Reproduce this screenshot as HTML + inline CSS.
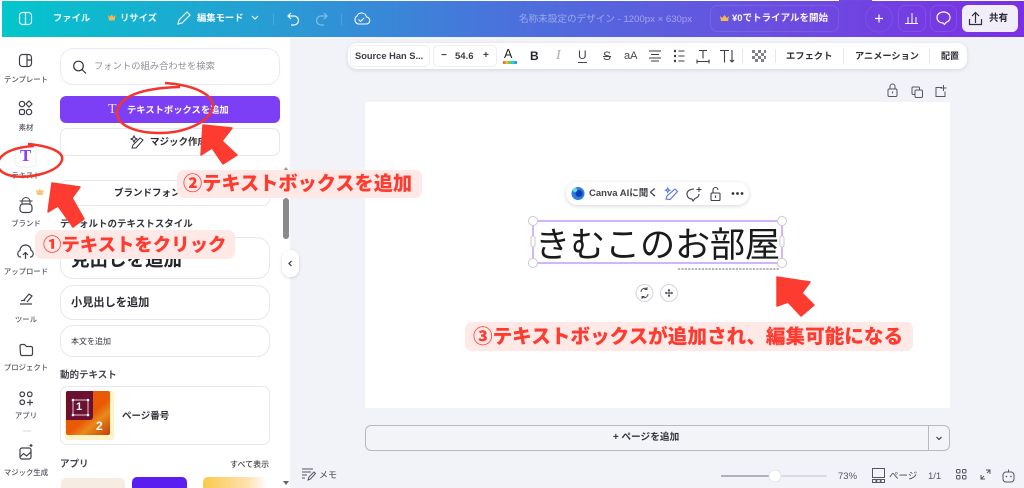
<!DOCTYPE html>
<html lang="ja"><head><meta charset="utf-8"><title>Canva</title>
<style>
*{box-sizing:border-box;margin:0;padding:0}
html,body{width:1024px;height:488px;overflow:hidden;background:#fff}
body{position:relative;font-family:"Liberation Sans","Noto Sans CJK JP",sans-serif;color:#2b2b33}
.a{position:absolute;white-space:nowrap}
.t{position:absolute;white-space:nowrap;line-height:1}
.box{position:absolute;background:#fff;border:1px solid #e6e7ef;border-radius:13px}
.nav{position:absolute;width:56px;text-align:center;font-size:7.4px;line-height:1;color:#55565f;font-weight:500;left:-2px}
svg{position:absolute;overflow:visible}
.lab{position:absolute;background:#ffe9e7;border-radius:7px;color:#ff3b30;font-weight:900;white-space:nowrap;line-height:1;display:flex;align-items:center}
.i{fill:none;stroke:#3f4048;stroke-width:1.2}
.h{font-weight:700;color:#fff}
</style></head><body>
<div class="a" style="left:290px;top:37px;width:734px;height:451px;background:#f1f3f8"></div>
<div class="a" style="left:2px;top:1px;width:1022px;height:36px;background:linear-gradient(90deg,#03c6cc 0%,#2a9ad4 28%,#4b70dc 50%,#6a4fe0 75%,#7b2fe3 100%)"></div>
<div class="a" style="left:839px;top:0;width:33px;height:1px;background:#6d4be0"></div>

<!-- top bar -->
<svg style="left:0;top:0" width="1024" height="37">
<g fill="none" stroke="#fff" stroke-width="1.2" opacity=".9">
<rect x="19.5" y="12.5" width="12" height="12" rx="3"/><path d="M25.5 12.5v12"/>
<path d="M178 24l1-4 8-8 3 3-8 8z"/>
<path d="M252 16l3 3 3-3"/>
</g>
<path d="M108 15l2 2 1.800-2.500 1.800 2.500 2-2-1 5.500h-5.600z" fill="#f5b74e"/>
<path d="M273.500 14v11M341.500 14v11" stroke="#fff" stroke-width=".8" opacity=".2"/>
<path d="M291 13l-3 3 3 3M288 16h6a4.500 4.500 0 0 1 0 9h-3" fill="none" stroke="#fff" stroke-width="1.200" opacity=".95"/>
<path d="M324 13l3 3-3 3M327 16h-6a4.500 4.500 0 0 0 0 9h3" fill="none" stroke="#fff" stroke-width="1.200" opacity=".4"/>
<path d="M358 24h8a3.500 3.500 0 0 0 .5-7 5 5 0 0 0-9.500-1 4.500 4.500 0 0 0 1 8zM358.500 19.500l2 2 3.500-3.500" fill="none" stroke="#fff" stroke-width="1.100"/>
<rect x="710.500" y="5.500" width="128" height="26" rx="7" fill="none" stroke="#fff" stroke-opacity=".1"/>
<path d="M720 16l2.200 2 2.300-3 2.300 3 2.200-2-1 5h-7z" fill="#f5b74e"/>
<circle cx="879" cy="18.500" r="13.500" fill="none" stroke="#fff" stroke-opacity=".08"/>
<path d="M879 14.500v8M875 18.500h8" stroke="#fff" stroke-width="1.200"/>
<rect x="898.500" y="5.500" width="27" height="26" rx="7" fill="none" stroke="#fff" stroke-opacity=".1"/>
<path d="M905 23.500h13M908 23v-6M912 23v-10M916 23v-6" stroke="#fff" stroke-width="1"/>
<rect x="930.500" y="5.500" width="26" height="26" rx="7" fill="none" stroke="#fff" stroke-opacity=".1"/>
<path d="M943.500 12c-4 0-6.500 2.500-6.500 5.500s2.500 5.500 6 5.500l1.500 1.500 1.500-2c2.500-1 4-2.600 4-5 0-3-2.500-5.500-6.500-5.500z" fill="none" stroke="#fff" stroke-width="1.200"/>
</svg>
<div class="t h" style="left:53px;top:14px;font-size:9.300px;opacity:.95">ファイル</div>
<div class="t h" style="left:120px;top:14px;font-size:9.300px;opacity:.95">リサイズ</div>
<div class="t h" style="left:197px;top:14px;font-size:9.300px;opacity:.95">編集モード</div>
<div class="t" style="left:519px;top:15px;font-size:9.600px;color:#fff;opacity:.42">名称未設定のデザイン - 1200px × 630px</div>
<div class="t h" style="left:732px;top:14px;font-size:9.500px;opacity:.95">¥0でトライアルを開始</div>
<div class="a" style="left:962px;top:5px;width:56px;height:27px;background:#f1edfb;border-radius:6px"></div>
<svg style="left:962px;top:5px" width="56" height="27"><path d="M13.500 8v10M10 11l3.500-3.500 3.500 3.500M7.500 14v5.500h12V14" fill="none" stroke="#2f2f38" stroke-width="1.200"/></svg>
<div class="t" style="left:989px;top:14px;font-size:9.500px;font-weight:700;color:#2b2b33">共有</div>

<!-- sidebar -->
<svg style="left:0;top:0" width="60" height="488">
<g class="i">
<rect x="19.500" y="54.500" width="12" height="12" rx="3"/><path d="M27 54.500v12M27 60h4.500"/>
<circle cx="22" cy="104" r="2.700"/><path d="M29 101l3 3-3 3-3-3z"/><rect x="19.500" y="109.500" width="5" height="5" rx="1.500"/><circle cx="29" cy="112" r="2.700"/>
<rect x="20" y="204" width="12" height="8.500" rx="3"/><path d="M22 204v-2.500a4 4 0 0 1 8 0v2.500M19.500 201h13" stroke-width="1"/>
<path d="M21 257h-1a3.500 3.500 0 0 1 0-6.500 5.500 5.500 0 0 1 11 0 3.500 3.500 0 0 1 0 6.500h-1M25.500 259v-6M23 255l2.500-2.500 2.500 2.500"/>
<path d="M20 304h12M24 300l5-6 3 2-5 6M21 301c2-1 3-1 4 0"/>
<path d="M20 346a1.500 1.500 0 0 1 1.500-1.500h3l2 2h4.500a1.500 1.500 0 0 1 1.500 1.500v6a1.500 1.500 0 0 1-1.500 1.500h-9a1.500 1.500 0 0 1-1.500-1.500z"/>
<rect x="20" y="392" width="4.500" height="4.500" rx="2"/><rect x="27.500" y="392" width="4.500" height="4.500" rx="2"/><rect x="20" y="400" width="4.500" height="4.500" rx="2"/><path d="M30 399.500v6M27 402.500h6"/>
<rect x="20" y="448" width="11" height="11" rx="2"/><path d="M20 457l3.500-3.500 3 2.500 4.500-4M31 444v3M29.500 445.500h3"/>
</g>
<path d="M23 431h8" stroke="#d9d9df" stroke-width="1"/>
<rect x="15" y="144" width="21" height="23" rx="5" fill="#fff" stroke="#e8e8f2" stroke-width=".7"/>
<path d="M36 189l2 2 1.800-2.500 1.800 2.500 2-2-1 6h-5.600z" fill="#f5c77e"/>
</svg>
<div class="t" style="left:20px;top:147px;font-size:17px;font-weight:700;color:#8b3dff;font-family:'Liberation Serif',serif;">T</div>
<div class="nav" style="top:76px">テンプレート</div>
<div class="nav" style="top:124px">素材</div>
<div class="nav" style="top:172px">テキスト</div>
<div class="nav" style="top:220px">ブランド</div>
<div class="nav" style="top:268px">アップロード</div>
<div class="nav" style="top:316px">ツール</div>
<div class="nav" style="top:364px">プロジェクト</div>
<div class="nav" style="top:412px">アプリ</div>
<div class="nav" style="top:469px">マジック生成</div>

<!-- panel -->
<div class="box" style="left:60px;top:48px;width:220px;height:37px;border-color:#ebe8fb"></div>
<svg style="left:60px;top:49px" width="40" height="37"><circle cx="18.500" cy="17" r="4.800" fill="none" stroke="#33343c" stroke-width="1.200"/><path d="M22 20.500l4 4" stroke="#33343c" stroke-width="1.200"/></svg>
<div class="t" style="left:94px;top:62px;font-size:9.300px;color:#8d8e96">フォントの組み合わせを検索</div>
<div class="a" style="left:60px;top:96px;width:220px;height:27px;background:#7d3ff5;border-radius:6px"></div>
<div class="t" style="left:108px;top:103px;font-size:14px;color:#e8ddff;font-family:'Liberation Serif',serif">T</div>
<div class="t" style="left:127px;top:106px;font-size:9.300px;color:#fff;font-weight:700">テキストボックスを追加</div>
<div class="box" style="left:60px;top:128px;width:220px;height:28px;border-radius:7px"></div>
<svg style="left:130px;top:134px" width="16" height="16"><path d="M2 14l1-3 7-7 3 2-7 8zM3 4l1-2 1 2 2 1-2 1-1 2-1-2-2-1z" fill="none" stroke="#30313a" stroke-width="1"/></svg>
<div class="t" style="left:150px;top:138px;font-size:9.500px;font-weight:700;color:#2b2b33">マジック作成</div>
<div class="box" style="left:60px;top:180px;width:210px;height:26px;border-radius:7px"></div>
<div class="t" style="left:114px;top:189px;font-size:9.500px;font-weight:700;color:#2b2b33">ブランドフォント</div>
<div class="t" style="left:60px;top:220px;font-size:9.500px;font-weight:700;color:#33343c">デフォルトのテキストスタイル</div>
<div class="box" style="left:60px;top:237px;width:210px;height:42px"></div>
<div class="t" style="left:71px;top:251px;font-size:18.500px;font-weight:700;color:#24242c">見出しを追加</div>
<div class="box" style="left:60px;top:285px;width:210px;height:35px"></div>
<div class="t" style="left:71px;top:298px;font-size:11.200px;font-weight:700;color:#2b2b33">小見出しを追加</div>
<div class="box" style="left:60px;top:325px;width:210px;height:32px"></div>
<div class="t" style="left:71px;top:338px;font-size:8px;color:#33343c">本文を追加</div>
<div class="t" style="left:60px;top:371px;font-size:9.500px;font-weight:700;color:#44454d">動的テキスト</div>
<div class="box" style="left:60px;top:386px;width:210px;height:59px;border-radius:7px"></div>
<div class="a" style="left:65px;top:391px;width:49px;height:49px;background:#fdf3c4;border-radius:3px"></div>
<div class="a" style="left:66px;top:391px;width:44px;height:44px;background:linear-gradient(140deg,#ea5a06 55%,#e98a1c 70%,#c33d05);border-radius:2px"></div>
<div class="a" style="left:66px;top:391px;width:27px;height:29px;background:#6b1030;border-radius:2px 0 3px 0"></div>
<svg style="left:66px;top:391px" width="48" height="48"><rect x="7" y="9" width="15" height="15" fill="none" stroke="#fff" stroke-width=".8"/><g fill="#fff"><circle cx="7" cy="9" r="1.300"/><circle cx="22" cy="9" r="1.300"/><circle cx="7" cy="24" r="1.300"/><circle cx="22" cy="24" r="1.300"/></g></svg>
<div class="t" style="left:76px;top:402px;font-size:11px;font-weight:700;color:#fff">1</div>
<div class="t" style="left:96px;top:420px;font-size:12px;font-weight:700;color:#fff">2</div>
<div class="t" style="left:122px;top:412px;font-size:9.500px;font-weight:700;color:#33343c">ページ番号</div>
<div class="t" style="left:60px;top:460px;font-size:9.500px;font-weight:700;color:#44454d">アプリ</div>
<div class="t" style="left:230px;top:461px;font-size:8px;font-weight:500;color:#44454d">すべて表示</div>
<div class="a" style="left:61px;top:478px;width:64px;height:10px;background:#f6ece2;border-radius:5px 5px 0 0"></div>
<div class="a" style="left:132px;top:477px;width:55px;height:11px;background:#5a1ff0;border-radius:5px 5px 0 0"></div>
<div class="a" style="left:203px;top:477px;width:64px;height:11px;background:linear-gradient(90deg,#fbc94a,#fde2b0 70%,#fff);border-radius:5px 5px 0 0"></div>
<div class="a" style="left:283px;top:198px;width:6px;height:41px;background:#8a8a8a;border-radius:3px"></div>
<div class="a" style="left:283px;top:164px;width:0;height:0;border:3px solid transparent;border-bottom:4px solid #999"></div>
<div class="a" style="left:283px;top:481px;width:0;height:0;border:3px solid transparent;border-top:4px solid #666"></div>
<div class="a" style="left:282px;top:250px;width:17px;height:27px;background:#fff;border-radius:8px;box-shadow:0 1px 3px rgba(0,0,0,.15)"></div>
<svg style="left:282px;top:250px" width="17" height="27"><path d="M9.500 11l-2.500 2.500 2.500 2.500" fill="none" stroke="#33343c" stroke-width="1.200"/></svg>

<!-- canvas -->
<div class="a" style="left:365px;top:102px;width:585px;height:306px;background:#fff"></div>
<svg style="left:880px;top:76px" width="80" height="30"><g fill="none" stroke="#55565f" stroke-width="1">
<rect x="8" y="13" width="9" height="7.500" rx="1.200"/><path d="M10 13v-2.500a2.500 2.500 0 0 1 5 0V13M12.500 15.500v2"/>
<rect x="32" y="11" width="7.500" height="7.500" rx="1.200"/><rect x="35" y="14" width="7.500" height="7.500" rx="1.200" fill="#f1f3f8"/>
<path d="M62 11.500h-6v9h9v-5M63.500 9v6M60.500 12h6"/></g></svg>

<!-- format toolbar -->
<div class="a" style="left:348px;top:43px;width:619px;height:26px;background:#fff;border-radius:9px;box-shadow:0 1px 4px rgba(30,30,60,.13)"></div>
<div class="a" style="left:350px;top:45px;width:80px;height:22px;border:1px solid #eeeef3;border-radius:5px"></div>
<div class="a" style="left:433px;top:45px;width:64px;height:22px;border:1px solid #eeeef3;border-radius:5px"></div>
<div class="t" style="left:355px;top:52px;font-size:9.300px;font-weight:700;color:#3d3e46">Source Han S...</div>
<div class="t" style="left:441px;top:51px;font-size:10px;font-weight:700;color:#3d3e46">−</div>
<div class="t" style="left:455px;top:52px;font-size:9.500px;font-weight:700;color:#3d3e46">54.6</div>
<div class="t" style="left:483px;top:51px;font-size:10px;font-weight:700;color:#3d3e46">+</div>
<div class="t" style="left:504px;top:48px;font-size:12.500px;color:#222">A</div>
<div class="a" style="left:503px;top:61px;width:14px;height:3px;border-radius:1px;background:linear-gradient(90deg,#f33,#fb3,#4d4,#2cf,#36f)"></div>
<div class="t" style="left:530px;top:50px;font-size:12px;font-weight:700;color:#26262e">B</div>
<div class="t" style="left:556px;top:49px;font-size:14px;font-style:italic;color:#aaa;font-family:'Liberation Serif',serif">I</div>
<div class="t" style="left:578px;top:49px;font-size:12px;color:#44454d">U</div>
<div class="a" style="left:578px;top:62px;width:9px;height:1px;background:#44454d"></div>
<div class="t" style="left:603px;top:50px;font-size:12px;color:#44454d;text-decoration:line-through">S</div>
<div class="t" style="left:624px;top:51px;font-size:11px;color:#44454d">aA</div>
<svg style="left:640px;top:40px" width="300" height="30"><g stroke="#3d3e46" stroke-width="1.100" fill="none">
<path d="M9 11h12M11 14.500h8M9 18h12M11 21h8"/>
<path d="M38.500 11h6M38.500 16h6M38.500 21h6"/><path d="M34 11h2M34 16h2M34 21h2" stroke-width="2.200"/>
<path d="M59 10.500h8M63 10.500v8M57 21.500h12M57 19.500v4M69 19.500v4"/>
<path d="M80 10.500h9M84.500 10.500v12M92 10v12M90 20l2 2 2-2"/>
<path d="M102.500 9v14M135.500 9v14M203.500 9v14M289.500 9v14" stroke="#e2e2e8" stroke-width=".9"/></g>
<g fill="#55565f" opacity=".75"><path d="M112 10h3v3h-3zM118 10h3v3h-3zM124 10h2v3h-2zM115 13h3v3h-3zM121 13h3v3h-3zM112 16h3v3h-3zM118 16h3v3h-3zM124 16h2v3h-2zM115 19h3v3h-3zM121 19h3v3h-3z"/></g>
</svg>
<div class="t" style="left:786px;top:52px;font-size:9.300px;font-weight:700;color:#2f3038">エフェクト</div>
<div class="t" style="left:855px;top:52px;font-size:9.200px;font-weight:700;color:#2f3038">アニメーション</div>
<div class="t" style="left:941px;top:52px;font-size:9px;font-weight:700;color:#2f3038">配置</div>

<!-- floating bar -->
<div class="a" style="left:566px;top:182px;width:183px;height:23px;background:#fff;border-radius:12px;box-shadow:0 1px 4px rgba(30,30,60,.18)"></div>
<svg style="left:566px;top:182px" width="183" height="23">
<circle cx="12" cy="11.500" r="6.500" fill="#2a7fe0"/><circle cx="13" cy="11.500" r="3.500" fill="#0f3bb5"/><circle cx="9" cy="8" r="2.200" fill="#66dce8"/>
<path d="M100 17l1-3 8-7 2.500 2.500-7.500 8zM101 7.500l.7-1.500.7 1.500 1.500.7-1.500.7-.7 1.500-.7-1.500-1.500-.7z" fill="none" stroke="#5176e8" stroke-width="1.100"/>
<path d="M128 7c-4 0-7 2-7 5s2 5 5 5l1 2 2-2.500c2-.7 4-2 4-4.500" fill="none" stroke="#3d3e46" stroke-width="1.100"/>
<path d="M133 5v5M130.500 7.500h5" stroke="#3d3e46" stroke-width="1"/>
<rect x="145" y="11" width="9" height="7.500" rx="1" fill="none" stroke="#3d3e46" stroke-width="1.100"/><path d="M147 11V8a2.500 2.500 0 0 1 5 0M149.500 13.500v2.500" fill="none" stroke="#3d3e46" stroke-width="1.100"/>
<circle cx="167" cy="11.500" r="1.400" fill="#33343c"/><circle cx="171.500" cy="11.500" r="1.400" fill="#33343c"/><circle cx="176" cy="11.500" r="1.400" fill="#33343c"/>
</svg>
<div class="t" style="left:589px;top:189px;font-size:9.500px;font-weight:700;color:#44454d">Canva AIに聞く</div>

<!-- selected text -->
<div class="t" style="left:535px;top:222px;font-size:35.200px;line-height:41px;color:#1a1a1a;font-family:'Noto Sans CJK JP','Liberation Sans',sans-serif;font-weight:400;letter-spacing:-.2px">きむこのお部屋</div>
<svg style="left:520px;top:210px" width="280" height="80">
<rect x="13" y="11" width="249" height="42" fill="none" stroke="#b98cfb" stroke-width="1.300"/>
<g fill="#fff" stroke="#c9c9d0" stroke-width="1"><circle cx="13" cy="11" r="4.500"/><circle cx="262" cy="11" r="4.500"/><circle cx="13" cy="53" r="4.500"/><circle cx="262" cy="53" r="4.500"/><rect x="11" y="26" width="4" height="11" rx="2"/><rect x="260" y="26" width="4" height="11" rx="2"/></g>
<path d="M158 59h101" stroke="#6c6c72" stroke-width="1" stroke-dasharray="2.200 1.200"/>
</svg>
<svg style="left:635px;top:283px" width="50" height="20">
<g fill="#fff" stroke="#d4d4da"><circle cx="9.500" cy="10" r="8.500"/><circle cx="34" cy="10" r="8.500"/></g>
<path d="M6 9a3.800 3.800 0 0 1 6-3M13 11a3.800 3.800 0 0 1-6 3M12 4v2.500H9.500M7 16v-2.500h2.500M34 6.500v7M30.500 10h7M33 7.500l1-1 1 1M33 12.500l1 1 1-1M31.500 9l-1 1 1 1M36.500 9l1 1-1 1" fill="none" stroke="#44454d" stroke-width=".9"/>
</svg>

<!-- add page -->
<div class="a" style="left:365px;top:425px;width:585px;height:26px;background:#f3f4f8;border:1px solid #b7b9c2;border-radius:6px"></div>
<div class="a" style="left:928px;top:425px;width:1px;height:26px;background:#b7b9c2"></div>
<svg style="left:928px;top:425px" width="22" height="26"><path d="M8.500 12l2.500 2.500 2.500-2.500" fill="none" stroke="#33343c" stroke-width="1.100"/></svg>
<div class="t" style="left:613px;top:433px;font-size:9.700px;font-weight:700;color:#33343c">+ ページを追加</div>

<!-- footer -->
<svg style="left:0;top:0" width="1024" height="488"><g fill="none" stroke="#55565f" stroke-width="1">
<path d="M302 469h11M302 472h9M302 475h5M302 478h3M308 480l1-3 5-5 1.500 1.500-5 5.500z"/>
<rect x="872.500" y="468.500" width="12" height="9"/><path d="M872.500 479.500h3.500v3h-3.500zM876.800 479.500h3.500v3h-3.500zM881 479.500h3.500v3H881z"/>
<rect x="956.500" y="469.500" width="3.500" height="3.500" rx="1"/><rect x="962.500" y="469.500" width="3.500" height="3.500" rx="1"/><rect x="956.500" y="475.500" width="3.500" height="3.500" rx="1"/><rect x="962.500" y="475.500" width="3.500" height="3.500" rx="1"/>
<path d="M986 470h4v4M990 470l-3 3M984 476l-3 3M981 475v4h4"/>
<rect x="1003" y="472" width="11" height="10" rx="3"/><path d="M1008.500 472v-2.500"/>
</g>
<circle cx="1006.500" cy="476.500" r=".8" fill="#55565f"/><circle cx="1011" cy="476.500" r=".8" fill="#55565f"/>
<path d="M721 476h106" stroke="#d3d5dc" stroke-width="1.500"/>
<path d="M721 476h54" stroke="#9ea1ab" stroke-width="1.500"/>
<circle cx="775" cy="476" r="6" fill="#fff" stroke="#dcdde3" stroke-width=".7"/>
</svg>
<div class="t" style="left:319px;top:471px;font-size:9px;color:#44454d">メモ</div>
<div class="t" style="left:838px;top:472px;font-size:9.500px;color:#55565f">73%</div>
<div class="t" style="left:889px;top:472px;font-size:9.500px;color:#44454d">ページ</div>
<div class="t" style="left:928px;top:472px;font-size:9.500px;color:#55565f">1/1</div>

<!-- annotations -->
<svg style="left:0;top:0" width="1024" height="488">
<g fill="none" stroke="#f5352b" stroke-width="2.500">
<path d="M28 144C50 146 64 152 62 160 59 172 30 179 12 176 0 173-4 168-1 160 3 152 16 147 34 146"/>
<path d="M165 83C195 85 214 95 213 107 210 122 185 133 160 133 135 133 117 125 117 113 118 97 140 88 180 87"/>
</g>
<g fill="#fe3b30" stroke="#fe3b30" stroke-width="1.500" stroke-linejoin="round">
<path d="M52 183L80 187 72 198 84 219 73 227 58 206 48 212Z"/>
<path d="M203 125L232 128 222 141 237 155 223 164 212 148 201 155Z"/>
<path d="M777 277L810 282 802 293 814 305 801 316 788 302 777 306Z"/>
</g></svg>
<div class="lab" style="left:35px;top:230px;width:200px;height:29px;font-size:18.400px;padding:2px 0 0 8px">①テキストをクリック</div>
<div class="lab" style="left:177px;top:170px;width:245px;height:28px;font-size:19.200px;padding:2px 0 0 6px">②テキストボックスを追加</div>
<div class="lab" style="left:465px;top:322px;width:448px;height:29px;font-size:19.600px;padding:2px 0 0 8px">③テキストボックスが追加され、編集可能になる</div>
</body></html>
